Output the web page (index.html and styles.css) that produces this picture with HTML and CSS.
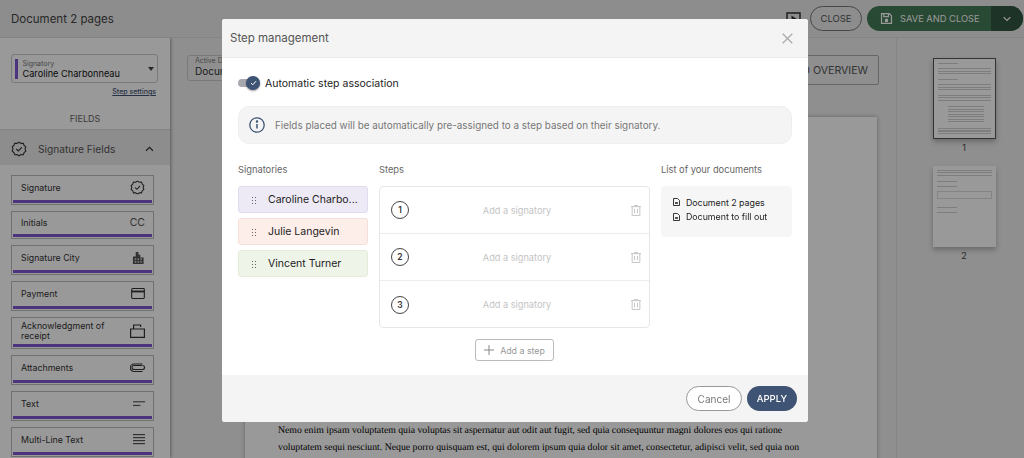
FILE: index.html
```html
<!DOCTYPE html>
<html>

<head>
    <title>Step management</title>
    <link rel="stylesheet" href="styles.css">
</head>

<body>
    <div class="topbar">
        <div class="doc-title">Document 2 pages</div>
        <div class="top-actions">
            <svg class="play-icon" width="15" height="14" viewBox="0 0 15 14"><rect x="1" y="1" width="13" height="11" fill="none" stroke="#333" stroke-width="1.5"/><path d="M5.500 3.500l5 3.200-5 3.200z" fill="#333"/></svg>
            <div class="btn-close">CLOSE</div>
            <div class="btn-save">
                <div class="save-main">
                    <svg width="13" height="13" viewBox="0 0 17 17" fill="none" stroke="#fff" stroke-width="1.6"><path d="M2 2h10l3 3v10H2z"/><path d="M5 2v4h6V2"/><circle cx="8.500" cy="11" r="1.600" fill="#fff"/></svg>
                    SAVE AND CLOSE
                </div>
                <div class="save-drop">
                    <svg width="10" height="6" viewBox="0 0 12 8" fill="none" stroke="#fff" stroke-width="1.600"><path d="M1.500 1.500L6 6l4.500-4.500"/></svg>
                </div>
            </div>
        </div>
    </div>

    <div class="workspace">
        <div class="sidebar">
            <div class="signatory-select">
                <div class="select-bar"></div>
                <div class="select-text">
                    <div class="select-label">Signatory</div>
                    <div class="select-value">Caroline Charbonneau</div>
                </div>
                <div class="select-caret"></div>
            </div>
            <div class="step-link">Step settings</div>
            <div class="fields-title">FIELDS</div>
            <div class="section-head">
                <svg class="section-icon" width="16" height="16" viewBox="0 0 16 16" fill="none" stroke="#333" stroke-width="1.100"><path d="M8 1.200l2 1.200 2.300-.1.800 2.100 1.700 1.500-.8 2.100.8 2.100-1.700 1.500-.8 2.100-2.300-.1-2 1.200-2-1.200-2.300.1-.8-2.100L1.200 10.100 2 8l-.8-2.100 1.700-1.500.8-2.100 2.300.1z"/><path d="M5.300 8l2 2 3.500-3.700"/></svg>
                <span>Signature Fields</span>
                <svg class="section-chevron" width="9" height="6" viewBox="0 0 10 7" fill="none" stroke="#333" stroke-width="1.400"><path d="M1 5.500l4-4 4 4"/></svg>
            </div>
            <div class="field-list">
                <div class="field"><span>Signature</span>
                    <svg width="15" height="15" viewBox="0 0 16 16" fill="none" stroke="#333" stroke-width="1.100"><path d="M8 1.200l2 1.200 2.300-.1.800 2.100 1.700 1.500-.8 2.100.8 2.100-1.700 1.500-.8 2.100-2.300-.1-2 1.200-2-1.200-2.300.1-.8-2.100L1.200 10.100 2 8l-.8-2.100 1.700-1.500.8-2.100 2.300.1z"/><path d="M5.300 8l2 2 3.500-3.700"/></svg>
                </div>
                <div class="field field-short"><span>Initials</span><b class="field-cc">CC</b></div>
                <div class="field"><span>Signature City</span>
                    <svg width="13" height="13" viewBox="0 0 14 14" fill="#555"><path d="M4 1h3v3h2v3h3.500v7H1V6h3zM3 8v1.500h1.500V8zm3 0v1.500h1.500V8zm3 0v1.500h1.500V8zM3 11v1.500h1.500V11zm3 0v1.500h1.500V11zm3 0v1.500h1.500V11z" fill-rule="evenodd"/></svg>
                </div>
                <div class="field"><span>Payment</span>
                    <svg width="14" height="11" viewBox="0 0 15 12" fill="none" stroke="#333" stroke-width="1.200"><rect x=".6" y=".6" width="13.800" height="10.800" rx="1"/><path d="M.6 3.800h13.800" stroke-width="2"/></svg>
                </div>
                <div class="field field-tall"><span>Acknowledgment of receipt</span>
                    <svg width="15" height="14" viewBox="0 0 15 14" fill="none" stroke="#333" stroke-width="1.200"><path d="M3.600 5V1h7v2M.6 5h13.800v8.400H.6z"/></svg>
                </div>
                <div class="field"><span>Attachments</span>
                    <svg width="15" height="10" viewBox="0 0 15 10" fill="none" stroke="#333" stroke-width="1.100"><path d="M12 2.500H4a2 2 0 0 0 0 4h8.500a1.500 1.500 0 0 0 0-4M12.500 1H4a3.500 3.500 0 0 0 0 7.500h8.500"/></svg>
                </div>
                <div class="field"><span>Text</span>
                    <svg width="12" height="6" viewBox="0 0 13 6" fill="#555"><rect width="13" height="1.200"/><rect y="4" width="8" height="1.200"/></svg>
                </div>
                <div class="field"><span>Multi-Line Text</span>
                    <svg width="12" height="11" viewBox="0 0 12 11" fill="#555"><rect width="12" height="1.200"/><rect y="3" width="12" height="1.200"/><rect y="6" width="12" height="1.200"/><rect y="9" width="12" height="1.200"/></svg>
                </div>
            </div>
        </div>

        <div class="main">
            <div class="toolbar">
                <div class="doc-select">
                    <div class="select-label">Active Document</div>
                    <div class="doc-select-value">Document 2 pages</div>
                </div>
                <div class="btn-overview">SIMPLIFIED OVERVIEW</div>
            </div>
            <div class="page">
                <p>Nemo enim ipsam voluptatem quia voluptas sit aspernatur aut odit aut fugit, sed quia consequuntur magni dolores eos qui ratione voluptatem sequi nesciunt. Neque porro quisquam est, qui dolorem ipsum quia dolor sit amet, consectetur, adipisci velit, sed quia non</p>
            </div>
        </div>

        <div class="thumbs">
            <div class="thumb thumb-active">
                <div class="thumb-lines thumb-h"></div>
                <div class="thumb-lines thumb-p"></div>
                <div class="thumb-lines thumb-h"></div>
                <div class="thumb-lines thumb-p"></div>
                <div class="thumb-lines thumb-p"></div>
                <div class="thumb-lines thumb-table"></div>
                <div class="thumb-lines thumb-p"></div>
            </div>
            <div class="thumb-num">1</div>
            <div class="thumb">
                <div class="thumb-lines thumb-p"></div>
                <div class="thumb-lines thumb-h"></div>
                <div class="thumb-lines thumb-h"></div>
                <div class="thumb-box"></div>
                <div class="thumb-lines thumb-h"></div>
                <div class="thumb-lines thumb-h"></div>
            </div>
            <div class="thumb-num">2</div>
        </div>
    </div>

    <div class="overlay">
        <div class="modal">
            <div class="modal-head">
                <span>Step management</span>
                <svg width="11" height="11" viewBox="0 0 11 11" fill="none" stroke="#aaa" stroke-width="1.300"><path d="M.7.7l9.600 9.600M10.300.7L.7 10.300"/></svg>
            </div>
            <div class="modal-body">
                <div class="toggle-row">
                    <div class="toggle">
                        <div class="toggle-knob">
                            <svg width="7" height="6" viewBox="0 0 7 6" fill="none" stroke="#fff" stroke-width="1"><path d="M1 3l1.800 1.800L6 1.200"/></svg>
                        </div>
                    </div>
                    <span>Automatic step association</span>
                </div>
                <div class="info-box">
                    <svg width="16" height="16" viewBox="0 0 16 16" fill="none" stroke="#3f5474" stroke-width="1.300"><circle cx="8" cy="8" r="7.200"/><path d="M8 7v4.500" stroke-width="1.500"/><circle cx="8" cy="4.600" r=".6" fill="#3f5474"/></svg>
                    <span>Fields placed will be automatically pre-assigned to a step based on their signatory.</span>
                </div>
                <div class="columns">
                    <div class="col-signatories">
                        <div class="col-title">Signatories</div>
                        <div class="signatory purple"><i class="grip"></i><span>Caroline Charbo...</span></div>
                        <div class="signatory red"><i class="grip"></i><span>Julie Langevin</span></div>
                        <div class="signatory green"><i class="grip"></i><span>Vincent Turner</span></div>
                    </div>
                    <div class="col-steps">
                        <div class="col-title">Steps</div>
                        <div class="steps-box">
                            <div class="step">
                                <div class="step-num">1</div>
                                <div class="step-text">Add a signatory</div>
                                <svg class="trash" width="10" height="11" viewBox="0 0 9 10" fill="none" stroke="#c4c4c4" stroke-width=".9"><path d="M0 1.500h9M3 1.500V.5h3v1M1 1.500v8h7v-8M3.200 3.500v4M5.800 3.500v4"/></svg>
                            </div>
                            <div class="step">
                                <div class="step-num">2</div>
                                <div class="step-text">Add a signatory</div>
                                <svg class="trash" width="10" height="11" viewBox="0 0 9 10" fill="none" stroke="#c4c4c4" stroke-width=".9"><path d="M0 1.500h9M3 1.500V.5h3v1M1 1.500v8h7v-8M3.200 3.500v4M5.800 3.500v4"/></svg>
                            </div>
                            <div class="step">
                                <div class="step-num">3</div>
                                <div class="step-text">Add a signatory</div>
                                <svg class="trash" width="10" height="11" viewBox="0 0 9 10" fill="none" stroke="#c4c4c4" stroke-width=".9"><path d="M0 1.500h9M3 1.500V.5h3v1M1 1.500v8h7v-8M3.200 3.500v4M5.800 3.500v4"/></svg>
                            </div>
                        </div>
                        <div class="add-step-row">
                            <div class="btn-add-step">
                                <svg width="10" height="10" viewBox="0 0 10 10" stroke="#888" stroke-width="1"><path d="M5 0v10M0 5h10"/></svg>
                                Add a step
                            </div>
                        </div>
                    </div>
                    <div class="col-docs">
                        <div class="col-title">List of your documents</div>
                        <div class="docs-box">
                            <div class="doc-row">
                                <svg width="7" height="8" viewBox="0 0 7 8" fill="none" stroke="#222" stroke-width=".9"><path d="M.5.500h4l2 2v5h-6z"/><path d="M2 5h3" stroke-width="1.600"/></svg>
                                Document 2 pages
                            </div>
                            <div class="doc-row">
                                <svg width="7" height="8" viewBox="0 0 7 8" fill="none" stroke="#222" stroke-width=".9"><path d="M.5.500h4l2 2v5h-6z"/><path d="M2 5h3" stroke-width="1.600"/></svg>
                                Document to fill out
                            </div>
                        </div>
                    </div>
                </div>
            </div>
            <div class="modal-foot">
                <div class="btn-cancel">Cancel</div>
                <div class="btn-apply">APPLY</div>
            </div>
        </div>
    </div>
</body>

</html>
```

FILE: styles.css
```css
html,
body {
    margin: 0;
    height: 458px;
    overflow: hidden;
}

body {
    background-color: #eeeeee;
    font-family: Inter, "Liberation Sans", sans-serif;
    color: #222;
}

/* top bar */
.topbar {
    height: 37px;
    display: flex;
    align-items: center;
    justify-content: space-between;
    background-color: #ebebeb;
    border-bottom: 1px solid #dcdcdc;
    padding: 0 1px 0 11px;
}

.doc-title {
    font-size: 11.500px;
    color: #444;
}

.top-actions {
    display: flex;
    align-items: center;
}

.play-icon {
    margin-right: 9px;
}

.btn-close {
    width: 50px;
    height: 23px;
    border: 1px solid #777;
    border-radius: 13px;
    display: flex;
    align-items: center;
    justify-content: center;
    font-size: 9.500px;
    color: #555;
    margin-right: 5px;
}

.btn-save {
    height: 25px;
    width: 156px;
    border-radius: 13px;
    display: flex;
    overflow: hidden;
    background-color: #447a55;
    color: #fff;
    font-size: 9.300px;
}

.save-main {
    flex: 1;
    display: flex;
    align-items: center;
    gap: 7px;
    padding-left: 13px;
}

.save-drop {
    width: 32px;
    background-color: #325544;
    display: flex;
    align-items: center;
    justify-content: center;
}

.workspace {
    display: flex;
    height: 420px;
    overflow: hidden;
}

/* left column */
.sidebar {
    width: 170px;
    flex: none;
    background-color: #ffffff;
    box-shadow: 1px 0 3px rgba(0, 0, 0, .35);
    padding-top: 16px;
}

.signatory-select {
    margin: 0 12px 0 11px;
    height: 27px;
    border: 1px solid #ccc;
    border-radius: 3px;
    display: flex;
    align-items: center;
    padding-left: 3px;
}

.select-bar {
    width: 2.500px;
    height: 20px;
    background-color: #7d58d0;
    margin-right: 5px;
}

.select-text {
    flex: 1;
}

.select-label {
    font-size: 7px;
    color: #777;
}

.select-value {
    font-size: 9.200px;
    color: #111;
}

.select-caret {
    border: 3.500px solid transparent;
    border-top: 4px solid #444;
    border-bottom: 0;
    margin-right: 3px;
}

.step-link {
    font-size: 7px;
    text-align: right;
    padding: 4px 14px 0 0;
    color: #3f5474;
    text-decoration: underline;
    font-weight: 500;
}

.fields-title {
    font-size: 9px;
    color: #666;
    text-align: center;
    margin-top: 17px;
    height: 16px;
}

.section-head {
    height: 33px;
    background-color: #ebebeb;
    border-top: 1px solid #ddd;
    display: flex;
    align-items: center;
    font-size: 10.200px;
    color: #555;
    padding: 2px 0 0 11px;
    box-sizing: content-box;
}

.section-head span {
    flex: 1;
    padding-left: 11px;
}

.section-chevron {
    margin-right: 16px;
}

.field-list {
    padding: 10px 0 0 11px;
}

.field {
    width: 143px;
    height: 30px;
    box-sizing: border-box;
    margin-bottom: 6px;
    border: 1px solid #bbb;
    background: linear-gradient(#7d58d0, #7d58d0) no-repeat center bottom 1px / calc(100% - 2px) 3px;
    display: flex;
    align-items: center;
    justify-content: space-between;
    padding: 0 8px 5px 9px;
    font-size: 8.800px;
    color: #333;
}

.field-short {
    height: 28px;
}

.field-tall {
    height: 32px;
    line-height: 9.500px;
}

.field-tall span {
    width: 100px;
}

.field-cc {
    font-weight: 400;
    font-size: 10.500px;
    color: #555;
}

/* page behind the dialog */
.main {
    flex: 1;
    padding: 17px 17px 0 17px;
    border-right: 1px solid #dcdcdc;
}

.toolbar {
    display: flex;
    justify-content: space-between;
    align-items: flex-start;
    height: 62px;
}

.doc-select {
    border: 1px solid #ccc;
    border-radius: 3px;
    width: 120px;
    height: 26px;
    padding-left: 7px;
    box-sizing: border-box;
}

.doc-select-value {
    font-size: 10px;
    color: #333;
}

.btn-overview {
    border: 1px solid #aaa;
    border-radius: 2px;
    height: 28px;
    padding: 0 10px;
    display: flex;
    align-items: center;
    font-size: 10.600px;
    color: #555;
}

.page {
    width: 632px;
    margin-left: 58px;
    height: 400px;
    background-color: #fff;
    box-sizing: border-box;
    padding: 305px 73px 0 33px;
    box-shadow: 0 0 4px rgba(0, 0, 0, .3);
    font-family: "Liberation Serif", serif;
    font-size: 9.750px;
    line-height: 17px;
    text-rendering: geometricPrecision;
    color: #000;
}

.page p {
    margin: 0;
}

/* thumbnails */
.thumbs {
    width: 127px;
    flex: none;
    padding: 20px 0 0 7px;
    display: flex;
    flex-direction: column;
    align-items: center;
    box-sizing: border-box;
}

.thumb {
    width: 63px;
    height: 81px;
    background-color: #fff;
    box-sizing: border-box;
    padding: 4px;
    box-shadow: 0 3px 5px rgba(0, 0, 0, .25);
}

.thumb-active {
    border: 1.500px solid #555;
}

.thumb-lines {
    margin-bottom: 4px;
    background: repeating-linear-gradient(#d0d0d0 0 1px, #fff 1px 2.500px);
}

.thumb-h {
    height: 1px;
    width: 20px;
}

.thumb-p {
    height: 7px;
}

.thumb-table {
    height: 18px;
    width: 36px;
    margin-left: 10px;
}

.thumb-box {
    height: 6px;
    border: 1px solid #ddd;
    margin-bottom: 8px;
}

.thumb-num {
    font-size: 9px;
    color: #444;
    height: 27px;
    padding-top: 3px;
    box-sizing: border-box;
}

/* dialog */
.overlay {
    position: fixed;
    inset: 0;
    background-color: rgba(0, 0, 0, .4);
    display: flex;
    justify-content: center;
    align-items: flex-start;
    padding: 19px 0 0 6px;
}

.modal {
    width: 586px;
    height: 403px;
    background-color: #fff;
    border-radius: 3px;
    display: flex;
    flex-direction: column;
    overflow: hidden;
}

.modal-head {
    height: 39px;
    background-color: #f4f4f4;
    box-sizing: border-box;
    border-bottom: 1px solid #eaeaea;
    display: flex;
    align-items: center;
    justify-content: space-between;
    padding: 0 15px 0 8px;
    font-size: 11.500px;
    color: #555;
}

.modal-body {
    flex: 1;
    padding: 0 16px;
}

.toggle-row {
    display: flex;
    align-items: center;
    gap: 5px;
    height: 48px;
    box-sizing: border-box;
    padding-top: 2px;
    font-size: 10.500px;
    color: #222;
}

.toggle {
    width: 22px;
    height: 8px;
    border-radius: 4px;
    background-color: #a8a8b0;
    display: flex;
    align-items: center;
    justify-content: flex-end;
}

.toggle-knob {
    width: 14px;
    height: 14px;
    flex: none;
    border-radius: 50%;
    background-color: #3f5474;
    display: flex;
    align-items: center;
    justify-content: center;
    box-shadow: 0 1px 2px rgba(0, 0, 0, .4);
}

.info-box {
    height: 38px;
    box-sizing: border-box;
    border: 1px solid #eee;
    border-radius: 11px;
    background-color: #f4f4f4;
    display: flex;
    align-items: center;
    gap: 10px;
    padding-left: 10px;
    font-size: 9.900px;
    color: #777;
}

.columns {
    display: flex;
    gap: 11px;
    padding-top: 20px;
}

.col-title {
    font-size: 9.300px;
    color: #666;
    height: 22px;
}

.col-signatories {
    width: 130px;
}

.col-steps {
    width: 271px;
}

.col-docs {
    width: 131px;
}

.signatory {
    height: 27px;
    box-sizing: border-box;
    border-radius: 3px;
    margin-bottom: 5px;
    display: flex;
    align-items: center;
    font-size: 10.500px;
    color: #222;
    padding-left: 12px;
}

.signatory span {
    padding-left: 11px;
}

.grip {
    width: 6px;
    height: 8px;
    background: radial-gradient(circle, #666 .9px, transparent 1px) 0 0 / 3px 3px;
}

.purple {
    background-color: #edeaf6;
    border: 1px solid #e0dcef;
}

.red {
    background-color: #fdeeea;
    border: 1px solid #f5dfda;
}

.green {
    background-color: #eff4e9;
    border: 1px solid #e3ecd9;
}

.steps-box {
    border: 1px solid #e6e6e6;
    border-radius: 4px;
    height: 142px;
    box-sizing: border-box;
}

.step {
    height: 47px;
    box-sizing: border-box;
    border-bottom: 1px solid #ececec;
    display: flex;
    align-items: center;
    padding: 0 8px 0 11px;
}

.step:last-child {
    border-bottom: 0;
}

.step-num {
    width: 16px;
    height: 16px;
    border: 1px solid #444;
    border-radius: 50%;
    display: flex;
    align-items: center;
    justify-content: center;
    font-size: 8.500px;
    font-weight: 600;
    color: #333;
}

.step-text {
    flex: 1;
    text-align: center;
    font-size: 9.200px;
    color: #c4c4c4;
    padding-right: 6px;
}

.add-step-row {
    display: flex;
    justify-content: center;
    padding-top: 11px;
}

.btn-add-step {
    width: 79px;
    height: 22px;
    box-sizing: border-box;
    border: 1px solid #bbb;
    border-radius: 3px;
    display: flex;
    align-items: center;
    justify-content: center;
    gap: 6px;
    font-size: 8.800px;
    color: #999;
}

.docs-box {
    background-color: #f6f6f6;
    border-radius: 4px;
    height: 51px;
    box-sizing: border-box;
    padding: 9px 0 0 12px;
}

.doc-row {
    display: flex;
    align-items: center;
    gap: 6px;
    font-size: 8.800px;
    color: #222;
    height: 14.500px;
}

.modal-foot {
    height: 47px;
    background-color: #f4f4f4;
    display: flex;
    align-items: center;
    justify-content: flex-end;
    gap: 5px;
    padding: 0 11px 0 0;
}

.btn-cancel {
    width: 56px;
    height: 25px;
    box-sizing: border-box;
    border: 1px solid #999;
    border-radius: 13px;
    background-color: #fff;
    display: flex;
    align-items: center;
    justify-content: center;
    font-size: 10px;
    color: #777;
}

.btn-apply {
    width: 50px;
    height: 25px;
    border-radius: 13px;
    background-color: #3f5474;
    color: #fff;
    display: flex;
    align-items: center;
    justify-content: center;
    font-size: 9.500px;
    font-weight: 500;
}
```
